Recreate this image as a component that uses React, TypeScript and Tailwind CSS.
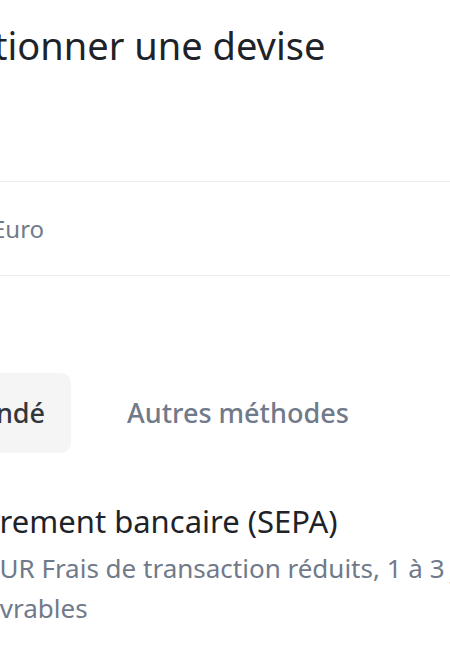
export default function App() {
  return (
    <div className="w-[450px] h-[652px] overflow-hidden bg-white" style={{ fontFamily: '"Noto Sans", sans-serif' }}>
      <div className="-ml-[98px] w-[760px] flex flex-col">
        <h1 className="mt-[19px] text-[38px] leading-[52px] font-normal text-[#1E2329]">
          Sélectionner une devise
        </h1>

        <div className="mt-[110px] h-[95px] border-y border-[#EAECEF] flex items-center">
          <span className="ml-[90px] text-[24px] text-[#707A8A]">Euro</span>
        </div>

        <div className="mt-[97px] flex items-center gap-[30px]">
          <button className="-ml-[61px] h-[80px] px-[26px] rounded-[10px] bg-[#F5F5F5] text-[27px] font-medium text-[#32373E]">
            Recommandé
          </button>
          <button className="h-[80px] px-[26px] text-[27px] font-medium text-[#707A8A]">
            Autres méthodes
          </button>
        </div>

        <div className="mt-[48px] ml-[66px] flex flex-col">
          <div className="ml-[5px] text-[31px] leading-[40px] text-[#1E2329]">Virement bancaire (SEPA)</div>
          <div className="mt-[7px] text-[26px] leading-[40px] text-[#707A8A]">
            <div className="ml-[17px]">EUR Frais de transaction réduits, 1 à 3 jours</div>
            <div>ouvrables</div>
          </div>
        </div>
      </div>
    </div>
  );
}
